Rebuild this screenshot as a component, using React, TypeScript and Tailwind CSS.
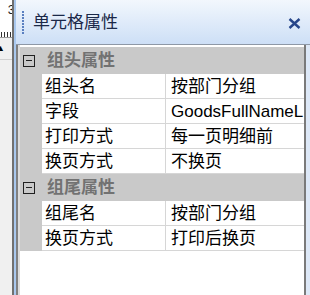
import React from "react";

// --------- property rows ---------

type Row = { name: string; value: string };
type Section = { title: string; rows: Row[] };

const SECTIONS: Section[] = [
  {
    title: "组头属性",
    rows: [
      { name: "组头名", value: "按部门分组" },
      { name: "字段", value: "GoodsFullNameL" },
      { name: "打印方式", value: "每一页明细前" },
      { name: "换页方式", value: "不换页" },
    ],
  },
  {
    title: "组尾属性",
    rows: [
      { name: "组尾名", value: "按部门分组" },
      { name: "换页方式", value: "打印后换页" },
    ],
  },
];

const FONT = "font-['Liberation_Sans','Noto_Sans_CJK_SC',sans-serif]";

function Collapse() {
  return (
    <div className="w-[12px] h-[12px] border border-[#202020] flex items-center justify-center">
      <div className="w-[6px] h-[1px] bg-[#202020]" />
    </div>
  );
}

function SectionHeader({ title }: { title: string }) {
  return (
    <div className="h-[27px] bg-[#c9c9c9] flex items-center">
      <div className="w-[22px] flex pl-[3px]">
        <Collapse />
      </div>
      <span className="ml-[5px] text-[17px] font-bold text-[#727272] leading-none">
        {title}
      </span>
    </div>
  );
}

function PropRow({ row }: { row: Row }) {
  return (
    <div className="h-[25px] flex">
      <div className="w-[22px] bg-[#c9c9c9]" />
      <div className="flex-1 flex bg-white border-b border-[#d6d6d6]">
        <div className="w-[124px] border-r border-[#d6d6d6] pl-[3px] flex items-center text-[17px] leading-none text-black">
          {row.name}
        </div>
        <div className="flex-1 pl-[5px] flex items-center text-[17px] leading-none text-black whitespace-nowrap overflow-hidden">
          {row.value}
        </div>
      </div>
    </div>
  );
}

export default function App() {
  return (
    <div className={`w-[310px] h-[295px] flex overflow-hidden bg-[#f0f0f0] ${FONT}`}>
      {/* ruler strip on the left */}
      <div className="w-[12px] flex flex-col">
        <div className="h-[31px] bg-white flex justify-end overflow-hidden">
          <span className="text-[13px] leading-none mt-[3px] mr-[-3px] text-[#202020]">3</span>
        </div>
        <div className="h-[6px] bg-white flex items-end gap-[2px] pl-[1px]">
          <div className="w-[1px] h-[5px] bg-[#333]" />
          <div className="w-[1px] h-[5px] bg-[#333]" />
          <div className="w-[1px] h-[5px] bg-[#333]" />
          <div className="w-[1px] h-[5px] bg-[#333]" />
        </div>
        <div className="h-[1px] bg-[#9a9a9a]" />
        <div className="h-[21px] flex items-center overflow-hidden">
          <span className="text-[9px] leading-none ml-[-4px] text-black">▲</span>
        </div>
        <div className="h-[1px] bg-[#d0d0d0]" />
        <div className="flex-1" />
      </div>
      <div className="w-[2px] bg-[#707070]" />

      {/* property panel */}
      <div className="flex-1 flex flex-col border-l-2 border-[#a9c8ee]">
        <div className="h-[45px] bg-gradient-to-b from-[#f2f7fd] to-[#cddff6] border-b border-[#8e98a6] flex items-center">
          <div className="ml-[6px] flex flex-col gap-[1px]">
            {[0, 1, 2, 3, 4, 5, 6, 7].map((i) => (
              <div key={i} className="w-[2px] h-[2px] bg-[#5a7fc0]" />
            ))}
          </div>
          <span className="ml-[9px] text-[17px] leading-none text-[#1a2848]">单元格属性</span>
          <svg className="ml-auto mr-[9px] mt-[2px]" width="13" height="11" viewBox="0 0 13 11">
            <path d="M1.5 1 L11.5 10 M11.5 1 L1.5 10" stroke="#27468a" strokeWidth="2.4" />
          </svg>
        </div>

        <div className="flex-1 flex">
          <div className="w-[2px] bg-[#808080]" />
          <div className="w-[2px] bg-[#dcdcdc]" />
          <div className="flex-1 flex flex-col bg-white pt-[2px]">
            {SECTIONS.map((s) => (
              <div key={s.title} className="flex flex-col">
                <SectionHeader title={s.title} />
                {s.rows.map((r, i) => (
                  <PropRow key={i} row={r} />
                ))}
              </div>
            ))}
            <div className="flex-1 bg-white" />
          </div>
          <div className="w-[2px] bg-[#7a7a7a]" />
          <div className="w-[4px] bg-[#dde8f7]" />
        </div>
      </div>
    </div>
  );
}
